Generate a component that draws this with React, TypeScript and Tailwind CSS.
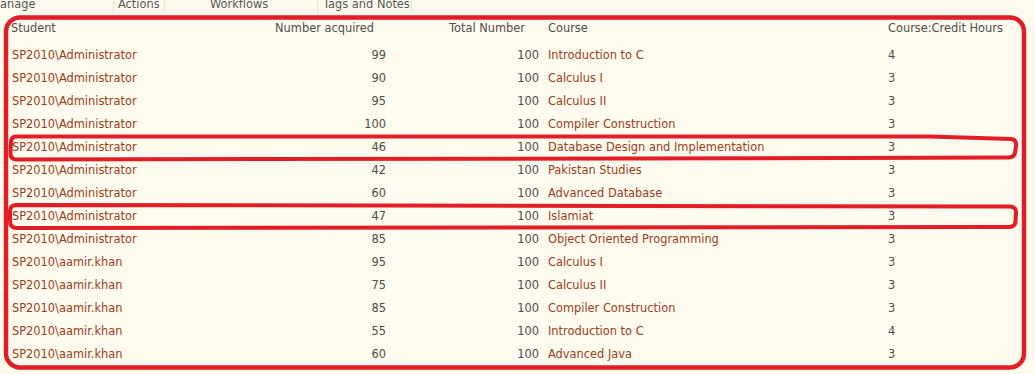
import React from 'react';

type Row = { student: string; acquired: number; total: number; course: string; hours: number };

const rows: Row[] = [
  { student: 'SP2010\\Administrator', acquired: 99, total: 100, course: 'Introduction to C', hours: 4 },
  { student: 'SP2010\\Administrator', acquired: 90, total: 100, course: 'Calculus I', hours: 3 },
  { student: 'SP2010\\Administrator', acquired: 95, total: 100, course: 'Calculus II', hours: 3 },
  { student: 'SP2010\\Administrator', acquired: 100, total: 100, course: 'Compiler Construction', hours: 3 },
  { student: 'SP2010\\Administrator', acquired: 46, total: 100, course: 'Database Design and Implementation', hours: 3 },
  { student: 'SP2010\\Administrator', acquired: 42, total: 100, course: 'Pakistan Studies', hours: 3 },
  { student: 'SP2010\\Administrator', acquired: 60, total: 100, course: 'Advanced Database', hours: 3 },
  { student: 'SP2010\\Administrator', acquired: 47, total: 100, course: 'Islamiat', hours: 3 },
  { student: 'SP2010\\Administrator', acquired: 85, total: 100, course: 'Object Oriented Programming', hours: 3 },
  { student: 'SP2010\\aamir.khan', acquired: 95, total: 100, course: 'Calculus I', hours: 3 },
  { student: 'SP2010\\aamir.khan', acquired: 75, total: 100, course: 'Calculus II', hours: 3 },
  { student: 'SP2010\\aamir.khan', acquired: 85, total: 100, course: 'Compiler Construction', hours: 3 },
  { student: 'SP2010\\aamir.khan', acquired: 55, total: 100, course: 'Introduction to C', hours: 4 },
  { student: 'SP2010\\aamir.khan', acquired: 60, total: 100, course: 'Advanced Java', hours: 3 },
];

const tabs = [
  { label: 'anage', w: 'w-[114px]', pl: 'pl-0' },
  { label: 'Actions', w: 'w-[51px]', pl: 'pl-[4px]' },
  { label: 'Workflows', w: 'w-[153px]', pl: 'pl-[45px]' },
  { label: 'Tags and Notes', w: 'w-[94px]', pl: 'pl-[5px]' },
];

const grid = 'grid grid-cols-[250px_124px_153px_349px_1fr] pl-[12px]';

export default function App() {
  return (
    <div className="relative w-[1035px] h-[374px] overflow-hidden bg-[#fffcef] font-['DejaVu_Sans',Verdana,sans-serif] text-[11.4px] text-[#4c4c4c]">
      {/* Ribbon tabs, cut off at the top */}
      <div className="flex h-[14px] overflow-hidden">
        {tabs.map((t) => (
          <div key={t.label} className={`${t.w} ${t.pl} h-full border-r border-[#ebe4cc] leading-[11px] -mt-[1px] text-[#555]`}>
            {t.label}
          </div>
        ))}
      </div>

      {/* Header */}
      <div className={`${grid} h-[27px] pt-[3px] items-center`}>
        <div className="-ml-[1px]">Student</div>
        <div className="text-right pr-[12px]">Number acquired</div>
        <div className="text-right pr-[14px]">Total Number</div>
        <div className="pl-[9px]">Course</div>
        <div>Course:Credit Hours</div>
      </div>

      {/* Rows */}
      <div className="mt-[3px]">
        {rows.map((r, i) => (
          <div key={i} className={`${grid} h-[23px] items-center`}>
            <div className="text-[#9c3b1b]">{r.student}</div>
            <div className="text-right">{r.acquired}</div>
            <div className="text-right">{r.total}</div>
            <div className="pl-[9px] text-[#9c3b1b]">{r.course}</div>
            <div>{r.hours}</div>
          </div>
        ))}
      </div>

      {/* Red annotation marks */}
      <svg className="absolute inset-0 pointer-events-none" width="1035" height="374" viewBox="0 0 1035 374" fill="none">
        <rect x="6" y="17.5" width="1018" height="350" rx="14" stroke="#e21d26" strokeWidth="4.5" />
        <path
          d="M16 136.5 L930 136.5 L1011 139 Q1017 140 1016 146 L1015 153 Q1014 157.5 1008 157.5 L620 158.5 L16 159.5 Q10 159 10.5 152 L11 142 Q11.5 136.5 16 136.5 Z"
          stroke="#e21d26"
          strokeWidth="4"
          strokeLinejoin="round"
        />
        <path
          d="M16 205 L1010 206.5 Q1016.5 207 1016 213 L1015.5 222 Q1015 227 1008 227 L16 228 Q10 227.5 10 221 L10 211 Q10.5 205 16 205 Z"
          stroke="#e21d26"
          strokeWidth="4"
          strokeLinejoin="round"
        />
      </svg>
    </div>
  );
}
